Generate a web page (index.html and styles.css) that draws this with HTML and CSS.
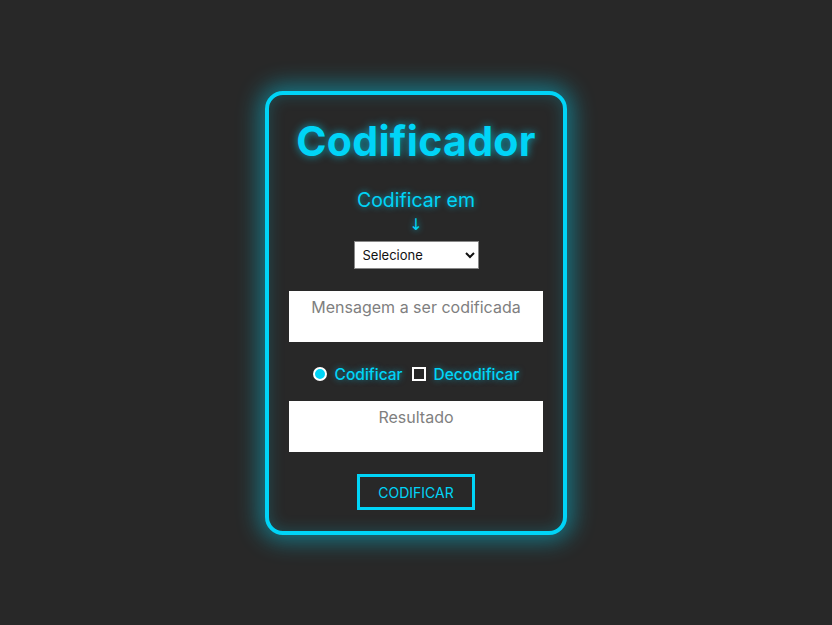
FILE: index.html
```html
<!DOCTYPE html>
<html lang="pt-BR">
<head>
<meta charset="utf-8">
<title>Codificador</title>
<link rel="stylesheet" href="styles.css">
</head>
<body>
<main class="card">
  <h1 class="title">Codificador</h1>
  <label class="label" for="tipo">Codificar em</label>
  <span class="arrow">↓</span>
  <select id="tipo" class="select">
    <option>Selecione</option>
  </select>
  <textarea class="area" placeholder="Mensagem a ser codificada"></textarea>
  <div class="options">
    <label class="opt"><span class="radio"></span>Codificar</label>
    <label class="opt"><span class="check"></span>Decodificar</label>
  </div>
  <textarea class="area result" placeholder="Resultado"></textarea>
  <button class="btn">CODIFICAR</button>
</main>
</body>
</html>
```
FILE: styles.css
```css
html, body {
  margin: 0;
  height: 100%;
}
body {
  background: #282828;
  font-family: Inter, "Open Sans", sans-serif;
  display: flex;
  justify-content: center;
  align-items: flex-start;
}
.card {
  margin-top: 91px;
  width: 294px;
  height: 436px;
  box-sizing: content-box;
  border: 4px solid #00d4f7;
  border-radius: 18px;
  background: #282828;
  box-shadow: 0 0 22px 6px rgba(0, 212, 247, 0.45), inset 0 0 16px rgba(0, 212, 247, 0.22);
  display: flex;
  flex-direction: column;
  align-items: center;
}
.title {
  margin: 22px 0 0;
  font-size: 41px;
  font-weight: 700;
  line-height: 48px;
  color: #00d4f7;
  letter-spacing: 0.3px;
  text-shadow: 0 0 8px rgba(0, 212, 247, 0.7);
}
.label {
  margin-top: 23px;
  font-size: 19.5px;
  line-height: 24px;
  color: #00d4f7;
  text-shadow: 0 0 6px rgba(0, 212, 247, 0.7);
}
.arrow {
  margin-top: 2px;
  font-size: 16px;
  line-height: 22px;
  color: #00d4f7;
  font-family: "DejaVu Sans", sans-serif;
  text-shadow: 0 0 6px rgba(0, 212, 247, 0.7);
}
.select {
  margin-top: 5px;
  width: 125px;
  height: 28px;
  font-family: Inter, sans-serif;
  font-size: 13px;
  color: #111;
  background: #fff;
  border: 1px solid #888;
  border-radius: 0;
  padding: 0 4px;
}
.area {
  margin-top: 22px;
  width: 254px;
  height: 51px;
  box-sizing: border-box;
  border: none;
  resize: none;
  background: #fff;
  font-family: Inter, sans-serif;
  font-size: 16px;
  text-align: center;
  padding: 6px 6px;
  color: #333;
  outline: none;
}
.area::placeholder {
  color: #7f7f7f;
}
.options {
  margin-top: 23px;
  display: flex;
  align-items: center;
  gap: 9px;
  height: 18px;
}
.opt {
  display: flex;
  align-items: center;
  gap: 8px;
  font-size: 15.5px;
  font-weight: 500;
  color: #00d4f7;
  text-shadow: 0 0 6px rgba(0, 212, 247, 0.6);
}
.radio {
  width: 10px;
  height: 10px;
  border-radius: 50%;
  background: #00d4f7;
  border: 2px solid #fff;
}
.check {
  width: 10px;
  height: 10px;
  border: 2px solid #fff;
  background: #282828;
}
.result {
  margin-top: 18px;
}
.btn {
  margin-top: 22px;
  width: 118px;
  height: 36px;
  background: transparent;
  border: 3px solid #00d4f7;
  color: #00d4f7;
  font-family: Inter, sans-serif;
  font-size: 14px;
  letter-spacing: 0;
  cursor: pointer;
}
```
